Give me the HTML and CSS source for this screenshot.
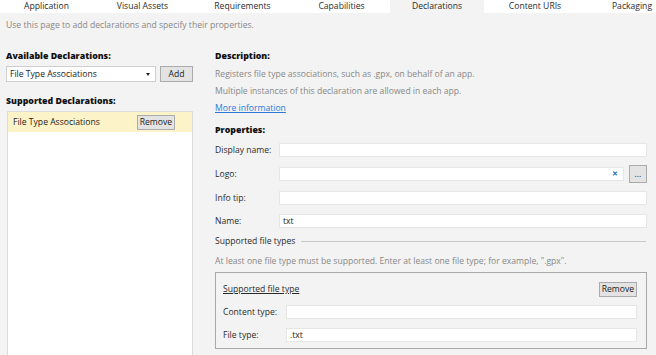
FILE: index.html
```html
<!DOCTYPE html>
<html lang="en">
<head>
  <meta charset="UTF-8">
  <title>Package.appxmanifest - Declarations</title>
  <link rel="stylesheet" href="styles.css">
</head>
<body>
  <div class="tabs">
    <div class="tab">Application</div>
    <div class="tab">Visual Assets</div>
    <div class="tab">Requirements</div>
    <div class="tab">Capabilities</div>
    <div class="tab active">Declarations</div>
    <div class="tab">Content URIs</div>
    <div class="tab">Packaging</div>
  </div>

  <p class="intro">Use this page to add declarations and specify their properties.</p>

  <div class="page">
    <div class="side">
      <h3>Available Declarations:</h3>
      <div class="picker">
        <div class="select">File Type Associations<span class="caret"></span></div>
        <button class="btn add">Add</button>
      </div>

      <h3 class="sub">Supported Declarations:</h3>
      <ul class="decl-list">
        <li class="active">
          <span>File Type Associations</span>
          <button class="btn">Remove</button>
        </li>
      </ul>
    </div>

    <div class="main">
      <h3>Description:</h3>
      <p class="desc">Registers file type associations, such as .gpx, on behalf of an app.</p>
      <p class="desc">Multiple instances of this declaration are allowed in each app.</p>
      <a class="more" href="#">More information</a>

      <h3 class="props-title">Properties:</h3>
      <div class="row">
        <label>Display name:</label>
        <div class="field"></div>
      </div>
      <div class="row logo">
        <label>Logo:</label>
        <div class="field"><span class="clear">&#x2715;</span></div>
        <button class="btn browse">...</button>
      </div>
      <div class="row">
        <label>Info tip:</label>
        <div class="field"></div>
      </div>
      <div class="row">
        <label>Name:</label>
        <div class="field">txt</div>
      </div>

      <div class="group-title">Supported file types</div>
      <p class="note">At least one file type must be supported. Enter at least one file type; for example, ".gpx".</p>

      <div class="filetype">
        <div class="filetype-head">
          <span class="filetype-name">Supported file type</span>
          <button class="btn">Remove</button>
        </div>
        <div class="row">
          <label>Content type:</label>
          <div class="field"></div>
        </div>
        <div class="row">
          <label>File type:</label>
          <div class="field">.txt</div>
        </div>
      </div>
    </div>
  </div>
</body>
</html>
```

FILE: styles.css
```css
body {
  margin: 0;
  background-color: #f3f3f3;
  color: #1e1e1e;
  font-family: "Open Sans", "Noto Sans", sans-serif;
  font-size: 8.6px;
  height: 355px;
  overflow: hidden;
}
.tabs {
  display: grid;
  grid-template-columns: 93px 99px 101px 97px 94px 102px 92px;
  background: #fff;
  height: 13px;
  overflow: hidden;
}
.tab {
  text-align: center;
  line-height: 12px;
  color: #2b2b2b;
  white-space: nowrap;
}
.tab.active {
  background: #f3f3f3;
}
.intro {
  margin: 6px 0 0 6px;
  line-height: 12px;
  color: #888;
}
.page {
  display: grid;
  grid-template-columns: 187px 432px;
  column-gap: 22px;
  padding: 19px 0 0 6px;
}
h3 {
  margin: 0;
  font-size: 8.8px;
  font-weight: 800;
  line-height: 12px;
  color: #111;
}
.picker {
  display: flex;
  gap: 4px;
  margin-top: 4px;
}
.select {
  position: relative;
  width: 150px;
  height: 16px;
  box-sizing: border-box;
  border: 1px solid #cfcfcf;
  background: #fff;
  padding-left: 3px;
  line-height: 14px;
  color: #222;
}
.caret {
  position: absolute;
  right: 5px;
  top: 6px;
  border-left: 2px solid transparent;
  border-right: 2px solid transparent;
  border-top: 3px solid #222;
}
.btn {
  font-family: inherit;
  font-size: 8.6px;
  color: #222;
  background: #e3e3e3;
  border: 1px solid #ababab;
  padding: 0 2px;
  height: 15px;
  line-height: 13px;
}
.add {
  width: 33px;
  height: 16px;
}
.sub {
  margin-top: 13px;
}
.decl-list {
  list-style: none;
  margin: 4px 0 0 1px;
  padding: 0;
  height: 250px;
  background: #fff;
  border: 1px solid #dcdcdc;
  border-bottom: 0;
}
.decl-list li {
  display: flex;
  align-items: center;
  justify-content: space-between;
  height: 20px;
  padding: 0 17px 0 5px;
  line-height: 20px;
  color: #222;
}
.decl-list li.active {
  background: #fdf3c8;
}
.desc {
  margin: 4px 0 0;
  line-height: 17px;
  color: #888;
}
.desc + .desc {
  margin-top: 0;
}
.more {
  display: block;
  line-height: 16px;
  color: #2b7bd6;
}
.props-title {
  margin-top: 8px;
}
.row {
  display: flex;
  align-items: center;
  height: 16px;
  margin-top: 7px;
}
.props-title + .row {
  margin-top: 6px;
}
.row label {
  width: 64px;
  flex: none;
  color: #2b2b2b;
}
.field {
  position: relative;
  flex: 1;
  height: 14px;
  box-sizing: border-box;
  background: #fff;
  border: 1px solid #e6e6e6;
  padding-left: 3px;
  line-height: 12px;
  color: #222;
}
.row.logo {
  height: 18px;
}
.clear {
  position: absolute;
  right: 5px;
  top: 0;
  color: #2a6cb5;
  font-size: 7px;
  font-weight: bold;
}
.browse {
  width: 18px;
  height: 18px;
  margin-left: 5px;
  padding: 0;
  line-height: 16px;
}
.group-title {
  display: flex;
  align-items: center;
  margin-top: 6px;
  line-height: 12px;
  color: #2b2b2b;
}
.group-title::after {
  content: "";
  flex: 1;
  height: 1px;
  margin: 1px 1px 0 6px;
  background: #c8c8c8;
}
.note {
  margin: 8px 0 0;
  line-height: 12px;
  color: #888;
}
.filetype {
  margin-top: 5px;
  border: 1px solid #a9a9a9;
  padding: 8px 9px 5px 7px;
}
.filetype-head {
  display: flex;
  align-items: center;
  justify-content: space-between;
  height: 16px;
}
.filetype-name {
  text-decoration: underline;
  color: #2b2b2b;
}
.filetype .row label {
  width: 63px;
}
```
